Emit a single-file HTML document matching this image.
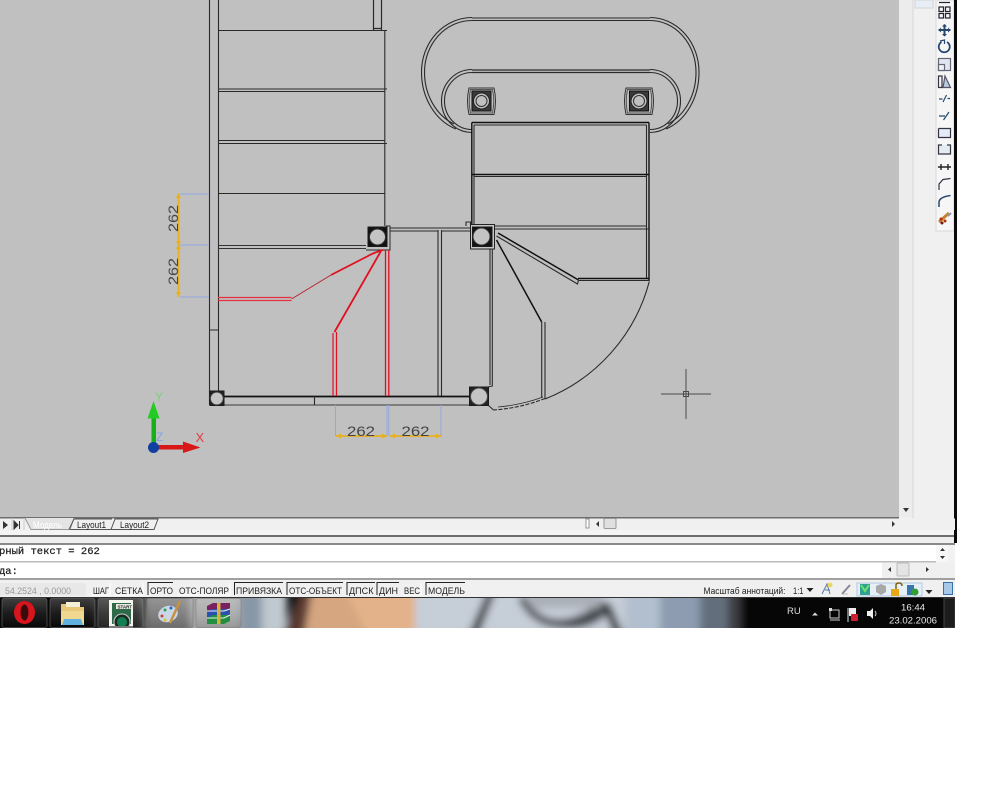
<!DOCTYPE html>
<html><head><meta charset="utf-8"><title>CAD</title>
<style>
html,body{margin:0;padding:0;background:#fff;width:1000px;height:800px;overflow:hidden}
svg{display:block}
text{font-family:"Liberation Sans",sans-serif}
.m{font-family:"Liberation Mono",monospace;font-size:10.5px;fill:#222;stroke:#222;stroke-width:.25px}
.s{font-size:9.6px;fill:#222}
.d{font-size:14px;fill:#444;font-weight:400}
</style></head><body>
<svg width="1000" height="800" viewBox="0 0 1000 800" xmlns="http://www.w3.org/2000/svg">
<defs>
<filter id="b" x="-10%" y="-50%" width="120%" height="200%"><feGaussianBlur stdDeviation="4"/></filter>
<clipPath id="tb"><rect x="0" y="598" width="955" height="30"/></clipPath>
<linearGradient id="btn" x1="0" y1="0" x2="0" y2="1"><stop offset="0" stop-color="#fff" stop-opacity=".22"/><stop offset=".5" stop-color="#fff" stop-opacity=".08"/><stop offset="1" stop-color="#000" stop-opacity=".1"/></linearGradient>
</defs>
<rect width="1000" height="800" fill="#fff"/>
<!-- canvas -->
<rect x="0" y="0" width="899" height="517" fill="#c0c0c0"/>
<!-- right chrome -->
<rect x="899" y="0" width="56" height="535" fill="#f0f0f0"/>
<rect x="899" y="0" width="14" height="517" fill="#ececec"/>
<line x1="913" y1="0" x2="913" y2="530" stroke="#d8d8d8"/>
<rect x="915" y="0" width="18" height="8" fill="#e8eef5" stroke="#d4d4d4"/>
<rect x="936" y="0" width="18" height="231" fill="#f6f6f6" stroke="#d8d8d8"/>
<rect x="954" y="0" width="3" height="543" fill="#0a0a0a"/>
<path d="M903 508h6l-3 4z" fill="#333"/>

<!-- CAD lines -->
<g fill="none" stroke="#2a2a2a" stroke-width="1.1">
 <!-- left flight -->
 <path d="M209.500 0V405M218.500 0V396M209.500 330H218.500"/>
 <path d="M373.500 0V30M381.500 0V30M373.500 28.500H381.500" stroke-width="1.200"/>
 <path d="M218 30.500H387M218 89H387M218 91.500H385M218 140.500H385M218 143.500H387M218 193.500H385M384.800 30V226"/>
 <path d="M218 245.500H366M218 248.500H366" stroke="#333"/>
 <!-- pillars near -->
 <path d="M366 250H390V226H386" stroke-width="1"/>
 <path d="M390 228H470M390 231H438M441 231H472" stroke-width="1.100"/>
 <path d="M438 230V396M441.500 230V396"/>
 <!-- bottom wall -->
 <path d="M224 396.500H469" stroke-width="1.800" stroke="#111"/>
 <path d="M210 405H469" stroke="#555" stroke-width="1.200"/>
 <path d="M314.500 396V405"/>
 <!-- oval -->
 <path d="M472 18H650M472 20.500H650"/>
 <path d="M472 70H650M472 72.500H650" stroke-width="1.200"/>
 <path d="M472 17.500A50.500 54.500 0 0 0 421.500 72A50.500 60 0 0 0 456 129"/>
 <path d="M472 20.500A47.500 51.500 0 0 0 424.500 72A47.500 56 0 0 0 454 124"/>
 <path d="M650 17.500A49 54.500 0 0 1 699 72A49 60 0 0 1 666 129"/>
 <path d="M650 20.500A46 51.500 0 0 1 696 72A46 56 0 0 1 668 124"/>
 <path d="M472 69.500A30.500 31.500 0 0 0 441.500 101A30.500 31.500 0 0 0 472 132.500"/>
 <path d="M472 72.500A27.500 28.500 0 0 0 444.500 101A27.500 28.500 0 0 0 472 129.500"/>
 <path d="M650 69.500A30.500 31.500 0 0 1 680.500 101A30.500 31.500 0 0 1 650 132.500"/>
 <path d="M650 72.500A27.500 28.500 0 0 1 677.500 101A27.500 28.500 0 0 1 650 129.500"/>
 <!-- upper right flight -->
 <path d="M471.800 122.500H649M471.800 122.500V226M649 122.500V281" stroke-width="1.400" stroke="#111"/>
 <path d="M474 125H646.500M474 125V226M646.500 125V278"/>
 <path d="M472 174.500H649" stroke-width="1.600" stroke="#111"/>
 <path d="M474 176.500H646.500"/>
 <path d="M474 226H646.500M494 229H649"/>
 <path d="M578 278.500H649" stroke-width="1.600" stroke="#111"/>
 <path d="M578 280.500H649"/>
 <!-- winders -->
 <path d="M498 233L578.500 280" stroke-width="1.500" stroke="#111"/>
 <path d="M496.500 236L577.500 284L578.500 280"/>
 <path d="M496.500 240L541.700 322" stroke-width="1.500" stroke="#111"/>
 <path d="M541.700 322V398M545 322V399"/>
 <path d="M490 249V385M492.300 249V386L488 387"/>
 <!-- arc -->
 <path d="M649.300 281.500A174 174 0 0 1 545 399"/>
 <path d="M545 398.500A174 174 0 0 1 493.500 410" stroke-dasharray="4 1.500"/>
 <path d="M543 397A174 174 0 0 1 498 407" stroke-width=".8"/>
 <path d="M488 405L493.500 410"/>
 <path d="M466 226V222H470.500V226"/>
</g>

<!-- pillars -->
<g fill="none" stroke="#1a1a1a">
 <path d="M469 88H494Q497 101 494 114.500H469Q466 101 469 88Z" stroke="#333"/>
 <path d="M470.500 89.500H492.500Q495 101 492.500 113H470.500Q468 101 470.500 89.500Z" stroke="#555"/>
 <rect x="472" y="91" width="19" height="20" fill="#3a3a3a" stroke="#111"/>
 <circle cx="481.500" cy="101" r="8" fill="#c0c0c0" stroke="#222"/><circle cx="481.500" cy="101" r="5.500" fill="#c0c0c0" stroke="#333"/>
 <path d="M626 88H652Q655 101 652 114.500H626Q623 101 626 88Z" stroke="#333"/>
 <path d="M627.500 89.500H650.500Q653 101 650.500 113H627.500Q625 101 627.500 89.500Z" stroke="#555"/>
 <rect x="629.500" y="91" width="19" height="20" fill="#3a3a3a" stroke="#111"/>
 <circle cx="639" cy="101" r="8" fill="#c0c0c0" stroke="#222"/><circle cx="639" cy="101" r="5.500" fill="#c0c0c0" stroke="#333"/>
 <!-- pillar A -->
 <rect x="368" y="227" width="19" height="19.500" fill="#111"/>
 <circle cx="377.500" cy="237" r="8" fill="#c4c4c4" stroke="#333"/>
 <!-- pillar B -->
 <rect x="470.500" y="224.500" width="24" height="24.500" fill="#c8c8c8" stroke="#222"/>
 <rect x="472.500" y="227" width="19.500" height="19.500" fill="#111"/>
 <circle cx="481.500" cy="236.500" r="8.500" fill="#c4c4c4" stroke="#333"/>
 <!-- pillar C -->
 <rect x="469.500" y="387" width="19" height="18.500" fill="#222"/>
 <circle cx="479" cy="396.500" r="8.500" fill="#c4c4c4" stroke="#444"/>
 <!-- pillar D -->
 <rect x="210" y="391" width="14" height="14.500" fill="#222"/>
 <circle cx="216.800" cy="398.500" r="6.500" fill="#c4c4c4" stroke="#333"/>
</g>

<!-- red -->
<g fill="none" stroke="#e01020">
 <path d="M218 297.500H291.500M218 300.500H291.500" stroke-width="1.300" stroke="#e63040"/>
 <path d="M291.500 299L331 275" stroke-width="1" stroke="#b82030"/>
 <path d="M331 275L368 256Q375 252 383 250" stroke-width="1.800"/>
 <path d="M334.500 332L381 251" stroke-width="1.800"/>
 <path d="M333 333V396M336.500 332V396" stroke-width="1.200"/>
 <path d="M385.500 250V396M388.800 250V396" stroke-width="1.300"/>
</g>

<!-- dimensions -->
<g fill="none" stroke="#8fa8e0" stroke-width="1">
 <path d="M180 194H209M180 245H209M180 297H209M335.500 405V436M387 405V436M388.800 405V436M441 405V436"/>
</g>
<g fill="none" stroke="#e8b020" stroke-width="1.800">
 <path d="M178.500 194V297M336 436H387M390 436H441"/>
</g>
<g fill="#e8b020">
 <path d="M178.500 193l-2.500 5h5zM178.500 246l-2.500-5h5zM178.500 244l-2.500 5h5zM178.500 297l-2.500-5h5zM336 436l5-2.500v5zM387 436l-5-2.500v5zM390 436l5-2.500v5zM441 436l-5-2.500v5z"/>
</g>
<text class="d" x="0" y="0" transform="translate(178 232) rotate(-90)" textLength="27" lengthAdjust="spacingAndGlyphs">262</text>
<text class="d" x="0" y="0" transform="translate(178 285) rotate(-90)" textLength="27" lengthAdjust="spacingAndGlyphs">262</text>
<text class="d" x="347" y="436" textLength="28" lengthAdjust="spacingAndGlyphs">262</text>
<text class="d" x="401.500" y="436" textLength="28" lengthAdjust="spacingAndGlyphs">262</text>

<!-- UCS -->
<text x="155" y="401" font-size="12" fill="#7ad07a">Y</text>
<text x="156" y="441" font-size="12" fill="#80a8e0">Z</text>
<text x="195.500" y="442" font-size="13" fill="#e04040">X</text>
<rect x="151.500" y="417" width="4.500" height="30" fill="#18b018"/>
<path d="M153.500 401L147.500 418.500H159.500Z" fill="#22cc22"/>
<rect x="154" y="445" width="30" height="4.500" fill="#d81818"/>
<path d="M200.500 447.500L183 441.500V453Z" fill="#d81818"/>
<circle cx="153.500" cy="447.500" r="5.500" fill="#1040a0"/>

<!-- crosshair -->
<g stroke="#4a4a4a" fill="none"><path d="M661 394H711M686 369V419"/><rect x="683.500" y="391.500" width="5" height="5"/></g>

<!-- toolbar icons -->
<g fill="none" stroke="#223" stroke-width="1.200">
 <path d="M939 2.500H950"/>
 <rect x="939" y="7" width="4.500" height="4.500"/><rect x="945.500" y="7" width="4.500" height="4.500"/>
 <rect x="939" y="13.500" width="4.500" height="4.500"/><rect x="945.500" y="13.500" width="4.500" height="4.500"/>
 <path d="M938.500 30H950.500M944.500 24.500V36" stroke="#27486e" stroke-width="2"/>
 <path d="M938.500 30l2.500-2.500v5zM950.500 30l-2.500-2.500v5zM944.500 24l-2.500 2.500h5zM944.500 36.500l-2.500-2.500h5z" fill="#27486e" stroke="none"/>
 <path d="M941.500 42A5.500 5.500 0 1 0 947 42" stroke="#27486e" stroke-width="1.800"/>
 <path d="M940 41L944.500 40V44" stroke="#27486e"/>
 <rect x="938.500" y="58.500" width="12" height="12" fill="#dfe6ef" stroke="#667"/><rect x="938.500" y="64.500" width="6" height="6" fill="#eef2f7" stroke="#667"/>
 <path d="M938.500 76H942V87.500H938.500Z" stroke="#334"/>
 <path d="M945 76L950.500 87.500H943Z" fill="#b9cbe0" stroke="#556"/>
 <path d="M939 99H942.500M943 102L946.500 95M947.500 98.500H950" stroke="#27486e"/>
 <path d="M939 116H945M943.500 120L949 112" stroke="#27486e"/>
 <path d="M938.500 128.500H941M947 128.500H950.500V137.500H938.500V128.500M941 128.500L947 128.500" fill="#e4ebf3" stroke="#334"/>
 <path d="M942 145H938.500V154H950.500V145H947" fill="#e4ebf3" stroke="#334"/>
 <path d="M938 167H951M941 164v6M948 164v6" stroke="#222" stroke-width="1.400"/>
 <path d="M939 190V184L943 179.500L950.500 178.500" stroke="#334"/>
 <path d="M939 207V202Q939.500 197 950.500 195.500" stroke="#27486e" stroke-width="1.500"/>
 <path d="M939 222L949 213" stroke="#c88030" stroke-width="3"/>
 <path d="M948 216L951 213" stroke="#8899aa" stroke-width="2"/>
 <circle cx="941" cy="219" r="1.500" fill="#b03010" stroke="none"/><circle cx="945" cy="221" r="1.500" fill="#b03010" stroke="none"/><circle cx="942" cy="223" r="1.500" fill="#702010" stroke="none"/>
</g>

<!-- tab bar -->
<rect x="0" y="517" width="899" height="1.500" fill="#6e6e6e"/>
<rect x="0" y="518.500" width="955" height="12" fill="#f0f0f0"/>
<path d="M3 521l5 4-5 4z" fill="#333"/>
<path d="M14 521l4 4-4 4zM19.500 521v8" fill="#333" stroke="#333"/>
<path d="M12 518v12M24 518v12" stroke="#ccc"/>
<path d="M25 518L31 529.500H70L74 518" fill="#e4e4e4" stroke="#999"/>
<text x="33" y="528" font-size="9.500" fill="#fff" textLength="29" lengthAdjust="spacingAndGlyphs">Модель</text>
<path d="M69 529.500L74 519H112M111 529.500L115 519H158L154 529.500H70" fill="none" stroke="#555"/>
<text x="77" y="528" font-size="9.500" fill="#222" textLength="29" lengthAdjust="spacingAndGlyphs">Layout1</text>
<text x="120" y="528" font-size="9.500" fill="#222" textLength="29" lengthAdjust="spacingAndGlyphs">Layout2</text>
<rect x="586" y="519" width="3" height="9" fill="#fff" stroke="#999"/>
<path d="M599 521v6l-3-3z" fill="#333"/>
<rect x="604" y="518.500" width="12" height="10" rx="1" fill="#e0e0e0" stroke="#999"/>
<path d="M892 521v6l3-3z" fill="#333"/>
<rect x="0" y="530.500" width="955" height="5" fill="#f4f4f4"/>
<rect x="0" y="535" width="955" height="2" fill="#6e6e6e"/>
<rect x="0" y="537" width="955" height="6" fill="#eeeeee"/>
<rect x="0" y="543" width="955" height="2" fill="#8a8a8a"/>
<rect x="954" y="530" width="3" height="13" fill="#0a0a0a"/>

<!-- command -->
<rect x="0" y="545" width="955" height="35" fill="#fff"/>
<rect x="0" y="561" width="936" height="1.500" fill="#bcbcbc"/>
<rect x="936" y="545" width="19" height="35" fill="#f2f2f2"/>
<rect x="936" y="545" width="12" height="17" fill="#f7f7f7"/>
<path d="M942.500 548l-2.500 3h5zM942.500 559l-2.500-3h5z" fill="#333"/>
<rect x="882" y="562.500" width="73" height="16" fill="#f0f0f0"/>
<rect x="897" y="563" width="12" height="13" rx="1" fill="#e4e4e4" stroke="#bbb"/>
<path d="M891 567v5l-3-2.500zM926 567v5l3-2.500z" fill="#333"/>
<text class="m" x="-1" y="554">рный текст = 262</text>
<text class="m" x="-1" y="574">да:</text>

<!-- status bar -->
<rect x="0" y="578" width="955" height="2" fill="#a0a0a0"/>
<rect x="0" y="580" width="955" height="17.500" fill="#f0f0f0"/>
<rect x="0" y="597" width="955" height="1.200" fill="#333"/>
<rect x="0" y="583" width="86" height="12.500" fill="#e8e8e8"/>
<text x="5" y="594" font-size="9.600" fill="#999" textLength="66" lengthAdjust="spacingAndGlyphs">54.2524 , 0.0000</text>
<g fill="none" stroke="#222" stroke-width="1">
 <path d="M148 595V582.500H173M234.500 595V582.500H283M287 595V582.500H343M347 595V582.500H375M377 595V582.500H399M426 595V582.500H465"/>
</g>
<g fill="none" stroke="#fff"><path d="M92 595H110V583M114 595H143V583M178 595H230V583M403 595H421V583"/></g>
<g>
 <text class="s" x="93" y="594" textLength="16" lengthAdjust="spacingAndGlyphs">ШАГ</text>
 <text class="s" x="115" y="594" textLength="28" lengthAdjust="spacingAndGlyphs">СЕТКА</text>
 <text class="s" x="150" y="594" textLength="23" lengthAdjust="spacingAndGlyphs">ОРТО</text>
 <text class="s" x="179" y="594" textLength="50" lengthAdjust="spacingAndGlyphs">ОТС-ПОЛЯР</text>
 <text class="s" x="236" y="594" textLength="46" lengthAdjust="spacingAndGlyphs">ПРИВЯЗКА</text>
 <text class="s" x="289" y="594" textLength="53" lengthAdjust="spacingAndGlyphs">ОТС-ОБЪЕКТ</text>
 <text class="s" x="349" y="594" textLength="24.500" lengthAdjust="spacingAndGlyphs">ДПСК</text>
 <text class="s" x="379" y="594" textLength="19" lengthAdjust="spacingAndGlyphs">ДИН</text>
 <text class="s" x="404" y="594" textLength="16" lengthAdjust="spacingAndGlyphs">ВЕС</text>
 <text class="s" x="428" y="594" textLength="37" lengthAdjust="spacingAndGlyphs">МОДЕЛЬ</text>
 <text class="s" x="703.500" y="594" textLength="82" lengthAdjust="spacingAndGlyphs">Масштаб аннотаций:</text>
 <text class="s" x="793" y="594" textLength="10.500" lengthAdjust="spacingAndGlyphs">1:1</text>
</g>
<path d="M806.500 588h7l-3.500 4z" fill="#222"/>
<path d="M822 594L827 584L830 594M825 590H830" stroke="#5577aa" fill="none"/>
<circle cx="830" cy="585" r="2.500" fill="#e8d860"/>
<path d="M842 594L850 585" stroke="#889" stroke-width="2"/><path d="M843 594L848 594" stroke="#bbb"/>
<rect x="857" y="583" width="65" height="13" fill="#e6eef8" stroke="#b0c8e0"/>
<rect x="860" y="584" width="10" height="11" fill="#30a090"/><path d="M861 585L865 591L869 585" stroke="#70e070" fill="none" stroke-width="2"/>
<path d="M876 586L881 584L886 586V592L881 595L876 592Z" fill="#a8a8a8"/>
<rect x="891" y="589" width="8" height="7" fill="#e8a818"/><path d="M896 589V585Q896 583 899 583Q902 583 902 586" fill="none" stroke="#806010" stroke-width="1.500"/>
<rect x="907" y="585" width="7" height="10" fill="#3878a8"/><circle cx="915" cy="592" r="3.500" fill="#30a030"/>
<path d="M925.500 590h7l-3.500 4z" fill="#222"/>
<rect x="943.500" y="582.500" width="9" height="12" fill="#a8c8e8" stroke="#3870a8"/>

<!-- taskbar -->
<g clip-path="url(#tb)">
 <rect x="0" y="598" width="955" height="30" fill="#080808"/>
 <g filter="url(#b)">
  <rect x="95" y="590" width="50" height="46" fill="#2a2a2a"/>
  <rect x="145" y="590" width="50" height="46" fill="#777"/>
  <rect x="190" y="590" width="72" height="46" fill="#a8a8a8"/>
  <rect x="240" y="590" width="24" height="46" fill="#8797a6"/>
  <rect x="262" y="590" width="25" height="46" fill="#c0c8d0"/>
  <path d="M300 590H415L422 636H290Z" fill="#e3b28a"/>
  <path d="M305 590H345L368 636H290Z" fill="#d6a681"/>
  <path d="M300 590L312 590L304 636H282Z" fill="#5a3a30"/>
  <rect x="415" y="590" width="210" height="46" fill="#c6ced8"/>
  <path d="M488 590H496L478 636H468Z" fill="#2c2f34"/>
  <path d="M525 596Q540 625 570 618Q590 612 602 600L610 612Q590 632 560 628Q530 626 518 598Z" fill="#44474d"/>
  <path d="M602 603L610 603L624 636H614Z" fill="#2f3237"/>
  <rect x="530" y="590" width="70" height="18" fill="#aab0b8"/>
  <rect x="625" y="590" width="40" height="46" fill="#b2bfce"/>
  <rect x="660" y="590" width="45" height="46" fill="#8d9cb0"/>
  <rect x="700" y="590" width="30" height="46" fill="#646e7c"/>
  <rect x="728" y="590" width="14" height="46" fill="#3e3e42"/>
 </g>
 <rect x="748" y="598" width="207" height="30" fill="#060606"/>
 <!-- buttons -->
 <g fill="url(#btn)" stroke="#777" stroke-opacity=".5">
  <rect x="2" y="598.500" width="45" height="29" rx="2"/>
  <rect x="50" y="598.500" width="45" height="29" rx="2"/>
  <rect x="98" y="598.500" width="45" height="29" rx="2"/>
  <rect x="147" y="598.500" width="46" height="29" rx="2"/>
  <rect x="196" y="598.500" width="45" height="29" rx="2"/>
 </g>
 <!-- opera -->
 <ellipse cx="24.500" cy="612.500" rx="10.500" ry="11.500" fill="#d8141c"/>
 <ellipse cx="24.500" cy="612.500" rx="4" ry="8" fill="#3a0a0c"/>
 <!-- folder -->
 <path d="M61 604H72L75 607H84V625H61Z" fill="#e8c878"/>
 <rect x="66" y="602" width="14" height="5" fill="#f4f0d8"/>
 <path d="M61 611H84V625H61Z" fill="#f0d890"/>
 <path d="M64 619H81L83 625H62Z" fill="#60b0e0"/>
 <!-- start -->
 <rect x="109" y="600" width="24" height="26" fill="#f4f4ec"/>
 <rect x="112" y="603" width="19" height="21" fill="#2e6a4a"/>
 <rect x="116" y="604" width="15" height="5" fill="#e8e8e0"/>
 <text x="117.500" y="608.500" font-size="4.500" font-weight="700" fill="#222">START</text>
 <circle cx="122" cy="622" r="8" fill="#1a2a20" stroke="#ccc"/>
 <circle cx="122" cy="622" r="5" fill="#108050"/>
 <rect x="109" y="626" width="24" height="2" fill="#777"/>
 <!-- palette -->
 <ellipse cx="168" cy="614" rx="10" ry="8" fill="#c8d8e8" transform="rotate(-20 168 614)"/>
 <circle cx="162" cy="616" r="1.500" fill="#d04030"/><circle cx="165" cy="610" r="1.500" fill="#30a050"/><circle cx="171" cy="608" r="1.500" fill="#3060c0"/><circle cx="165" cy="620" r="1.500" fill="#e0c030"/>
 <path d="M180 601L170 623" stroke="#c89040" stroke-width="2.500"/>
 <!-- rar -->
 <path d="M207 606L213 603H230V609L224 611H207Z" fill="#7a2060"/>
 <path d="M207 611L213 609H230V615L224 618H207Z" fill="#2a50b0"/>
 <path d="M207 618L213 615H230V621L224 624H207Z" fill="#209040"/>
 <path d="M207 611H224L230 609M207 618H224L230 615" stroke="#eee" fill="none"/>
 <rect x="217" y="603" width="3.500" height="21" fill="#d8b040"/>
 <!-- tray -->
 <text x="787" y="614" font-size="9.500" fill="#ddd">RU</text>
 <path d="M812 615.500h6l-3-3z" fill="#ddd"/>
 <rect x="830" y="610" width="9" height="8" fill="none" stroke="#ccc"/><rect x="829" y="608" width="3" height="3" fill="#ddd"/><path d="M830 620H840" stroke="#ccc"/>
 <path d="M848 608V622" stroke="#ddd"/><path d="M849 608H856V616H849Z" fill="#eee"/><rect x="851" y="614" width="7" height="7" rx="1" fill="#d02030"/>
 <path d="M867 611H870L873 608V619L870 616H867Z" fill="#eee"/><path d="M875 611Q877 613.500 875 616" stroke="#ccc" fill="none"/>
 <text x="913" y="610.500" font-size="9.600" fill="#e8e8e8" text-anchor="middle">16:44</text>
 <text x="913" y="623.500" font-size="9.600" fill="#e8e8e8" text-anchor="middle">23.02.2006</text>
 <rect x="944" y="598" width="11" height="30" fill="#1c1c1c" stroke="#444"/>
</g>
</svg>
</body></html>
